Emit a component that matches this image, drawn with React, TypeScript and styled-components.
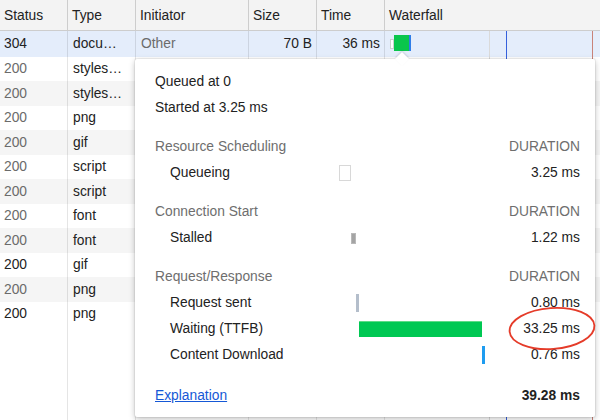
import React from 'react';
import styled, { createGlobalStyle } from 'styled-components';

const GlobalStyle = createGlobalStyle`
  html, body {
    margin: 0;
    padding: 0;
    background: #fff;
    overflow: hidden;
  }
  body {
    font-family: 'Liberation Sans', Arial, sans-serif;
    font-size: 13.8px;
    color: #222;
  }
`;

const COLUMNS = '68px 68px 113px 68px 68px 1fr';

const Page = styled.div`
  position: relative;
  height: 420px;
  display: flex;
  flex-direction: column;
`;

const HeaderRow = styled.div`
  display: grid;
  grid-template-columns: ${COLUMNS};
  height: 31px;
  flex-shrink: 0;
  box-sizing: border-box;
  background: #f3f3f3;
  border-bottom: 1px solid #cdcdcd;
`;

const HeaderCell = styled.div`
  display: flex;
  align-items: center;
  padding: 0 4px;
  border-right: 1px solid #cdcdcd;
  color: #222;
  &:last-child {
    border-right: none;
  }
`;

type Tone = 'selected' | 'stripe' | 'plain';

const toneColor = (tone: Tone) =>
  tone === 'selected' ? '#e4edfb' : tone === 'stripe' ? '#f5f5f5' : '#fff';

const Row = styled.div<{ $tone: Tone }>`
  display: grid;
  grid-template-columns: ${COLUMNS};
  height: ${(p) => (p.$tone === 'selected' ? '25.5px' : '24.5px')};
  flex-shrink: 0;
  background: ${(p) => toneColor(p.$tone)};
`;

const FillerRow = styled.div`
  display: grid;
  grid-template-columns: ${COLUMNS};
  flex: 1;
  background: #fff;
`;

const Cell = styled.div<{ $right?: boolean; $muted?: boolean }>`
  display: flex;
  align-items: center;
  justify-content: ${(p) => (p.$right ? 'flex-end' : 'flex-start')};
  padding: 0 4px 0 5px;
  border-right: 1px solid rgba(0, 0, 0, 0.1);
  color: ${(p) => (p.$muted ? '#6b6b6b' : '#222')};
  white-space: nowrap;
  overflow: hidden;
`;

const StatusCell = styled(Cell)`
  padding-left: 4px;
`;

const WaterfallCell = styled.div`
  display: flex;
  align-items: center;
  padding-left: 5px;
  background-image: linear-gradient(#dadada, #dadada),
    linear-gradient(#3560dc, #3560dc), linear-gradient(#c98379, #c98379);
  background-size: 1px 100%, 1px 100%, 1px 100%;
  background-position: 104px 0, 121px 0, 207px 0;
  background-repeat: no-repeat;
`;

const QueueMark = styled.div`
  width: 2px;
  height: 8px;
  border: 1px solid #cfcfcf;
  background: #fff;
`;

const ActiveMark = styled.div`
  width: 15px;
  height: 16px;
  margin-top: -1px;
  background: #0ac64c;
  border-right: 2px solid #2f7de8;
`;

const Popover = styled.div`
  position: absolute;
  left: 135px;
  top: 59px;
  width: 460px;
  height: 358px;
  box-sizing: border-box;
  padding: 9px 15px 9px 20px;
  background: #fff;
  border-radius: 2px;
  box-shadow: 0 0 0 1px rgba(0, 0, 0, 0.05), 0 2px 6px rgba(0, 0, 0, 0.25);
  &::before {
    content: '';
    position: absolute;
    left: 262px;
    top: -5px;
    width: 10px;
    height: 10px;
    background: #fff;
    transform: rotate(45deg);
    box-shadow: -1px -1px 2px rgba(0, 0, 0, 0.12);
  }
`;

const InfoLine = styled.div`
  height: 26px;
  display: flex;
  align-items: center;
  color: #222;
`;

const Section = styled.div`
  display: grid;
  grid-template-columns: 1fr 146px 95px;
  grid-auto-rows: 26px;
  margin-top: 13px;
`;

const SectionTitle = styled.div`
  grid-column: 1 / 3;
  display: flex;
  align-items: center;
  color: #6e6e6e;
`;

const DurationLabel = styled.div`
  display: flex;
  align-items: center;
  justify-content: flex-end;
  color: #6e6e6e;
  text-transform: uppercase;
`;

const PhaseLabel = styled.div`
  display: flex;
  align-items: center;
  padding-left: 15px;
  color: #222;
`;

const Track = styled.div`
  display: flex;
  align-items: center;
  padding-top: 2px;
`;

type Phase = 'queueing' | 'stalled' | 'request' | 'waiting' | 'download';

const barLook: Record<Phase, string> = {
  queueing: 'height: 16px; border: 1px solid #d8d8d8; background: #fff;',
  stalled: 'height: 11px; background: #a4a4a4; border: 1px solid #b9b9b9;',
  request: 'height: 18px; background: #b4becb;',
  waiting: 'height: 16px; background: #00c853; border-top: 1px solid #5edc86;',
  download: 'height: 18px; background: #1e9cf0;',
};

const Bar = styled.div<{ $phase: Phase }>`
  flex-shrink: 0;
  box-sizing: border-box;
  ${(p) => barLook[p.$phase]}
`;

const Value = styled.div`
  display: flex;
  align-items: center;
  justify-content: flex-end;
  color: #222;
`;

const Footer = styled.div`
  height: 26px;
  margin-top: 15px;
  display: flex;
  align-items: center;
  justify-content: space-between;
`;

const ExplanationLink = styled.a`
  color: #1558d6;
  text-decoration: underline;
  cursor: pointer;
`;

const Total = styled.div`
  font-weight: bold;
  color: #222;
`;

const Annotation = styled.svg`
  position: absolute;
  left: 505px;
  top: 304px;
  width: 95px;
  height: 50px;
  overflow: visible;
`;

type Request = {
  status: string;
  type: string;
  initiator?: string;
  size?: string;
  time?: string;
  dark?: boolean;
};

const requests: Request[] = [
  { status: '304', type: 'docu…', initiator: 'Other', size: '70 B', time: '36 ms', dark: true },
  { status: '200', type: 'styles…' },
  { status: '200', type: 'styles…' },
  { status: '200', type: 'png' },
  { status: '200', type: 'gif' },
  { status: '200', type: 'script' },
  { status: '200', type: 'script' },
  { status: '200', type: 'font' },
  { status: '200', type: 'font' },
  { status: '200', type: 'gif', dark: true },
  { status: '200', type: 'png' },
  { status: '200', type: 'png', dark: true },
];

const headers = ['Status', 'Type', 'Initiator', 'Size', 'Time', 'Waterfall'];

type Timing = { label: string; phase: Phase; start: number; duration: number };

const TOTAL = 39.28;

const sections: { title: string; timings: Timing[] }[] = [
  {
    title: 'Resource Scheduling',
    timings: [{ label: 'Queueing', phase: 'queueing', start: 0, duration: 3.25 }],
  },
  {
    title: 'Connection Start',
    timings: [{ label: 'Stalled', phase: 'stalled', start: 3.25, duration: 1.22 }],
  },
  {
    title: 'Request/Response',
    timings: [
      { label: 'Request sent', phase: 'request', start: 4.47, duration: 0.8 },
      { label: 'Waiting (TTFB)', phase: 'waiting', start: 5.27, duration: 33.25 },
      { label: 'Content Download', phase: 'download', start: 38.52, duration: 0.76 },
    ],
  },
];

const pct = (v: number) => `${(v / TOTAL) * 100}%`;

export default function App() {
  return (
    <Page>
      <GlobalStyle />
      <HeaderRow>
        {headers.map((h) => (
          <HeaderCell key={h}>{h}</HeaderCell>
        ))}
      </HeaderRow>
      {requests.map((r, index) => (
        <Row
          key={index}
          $tone={index === 0 ? 'selected' : index % 2 === 0 ? 'stripe' : 'plain'}
        >
          <StatusCell $muted={!r.dark}>{r.status}</StatusCell>
          <Cell>{r.type}</Cell>
          <Cell $muted>{r.initiator}</Cell>
          <Cell $right>{r.size}</Cell>
          <Cell $right>{r.time}</Cell>
          <WaterfallCell>
            {index === 0 ? (
              <>
                <QueueMark />
                <ActiveMark />
              </>
            ) : null}
          </WaterfallCell>
        </Row>
      ))}
      <FillerRow>
        <Cell />
        <Cell />
        <Cell />
        <Cell />
        <Cell />
        <WaterfallCell />
      </FillerRow>

      <Popover>
        <InfoLine>Queued at 0</InfoLine>
        <InfoLine>Started at 3.25 ms</InfoLine>
        {sections.map((s) => (
          <Section key={s.title}>
            <SectionTitle>{s.title}</SectionTitle>
            <DurationLabel>Duration</DurationLabel>
            {s.timings.map((t) => (
              <React.Fragment key={t.label}>
                <PhaseLabel>{t.label}</PhaseLabel>
                <Track>
                  <Bar
                    $phase={t.phase}
                    style={{ marginLeft: pct(t.start), width: pct(t.duration) }}
                  />
                </Track>
                <Value>{t.duration.toFixed(2)} ms</Value>
              </React.Fragment>
            ))}
          </Section>
        ))}
        <Footer>
          <ExplanationLink>Explanation</ExplanationLink>
          <Total>{TOTAL.toFixed(2)} ms</Total>
        </Footer>
      </Popover>

      <Annotation viewBox="0 0 95 50">
        <ellipse
          cx="47"
          cy="24.5"
          rx="42.5"
          ry="20.5"
          fill="none"
          stroke="#e53b29"
          strokeWidth="1.8"
          transform="rotate(-4 47 24.5)"
        />
      </Annotation>
    </Page>
  );
}
